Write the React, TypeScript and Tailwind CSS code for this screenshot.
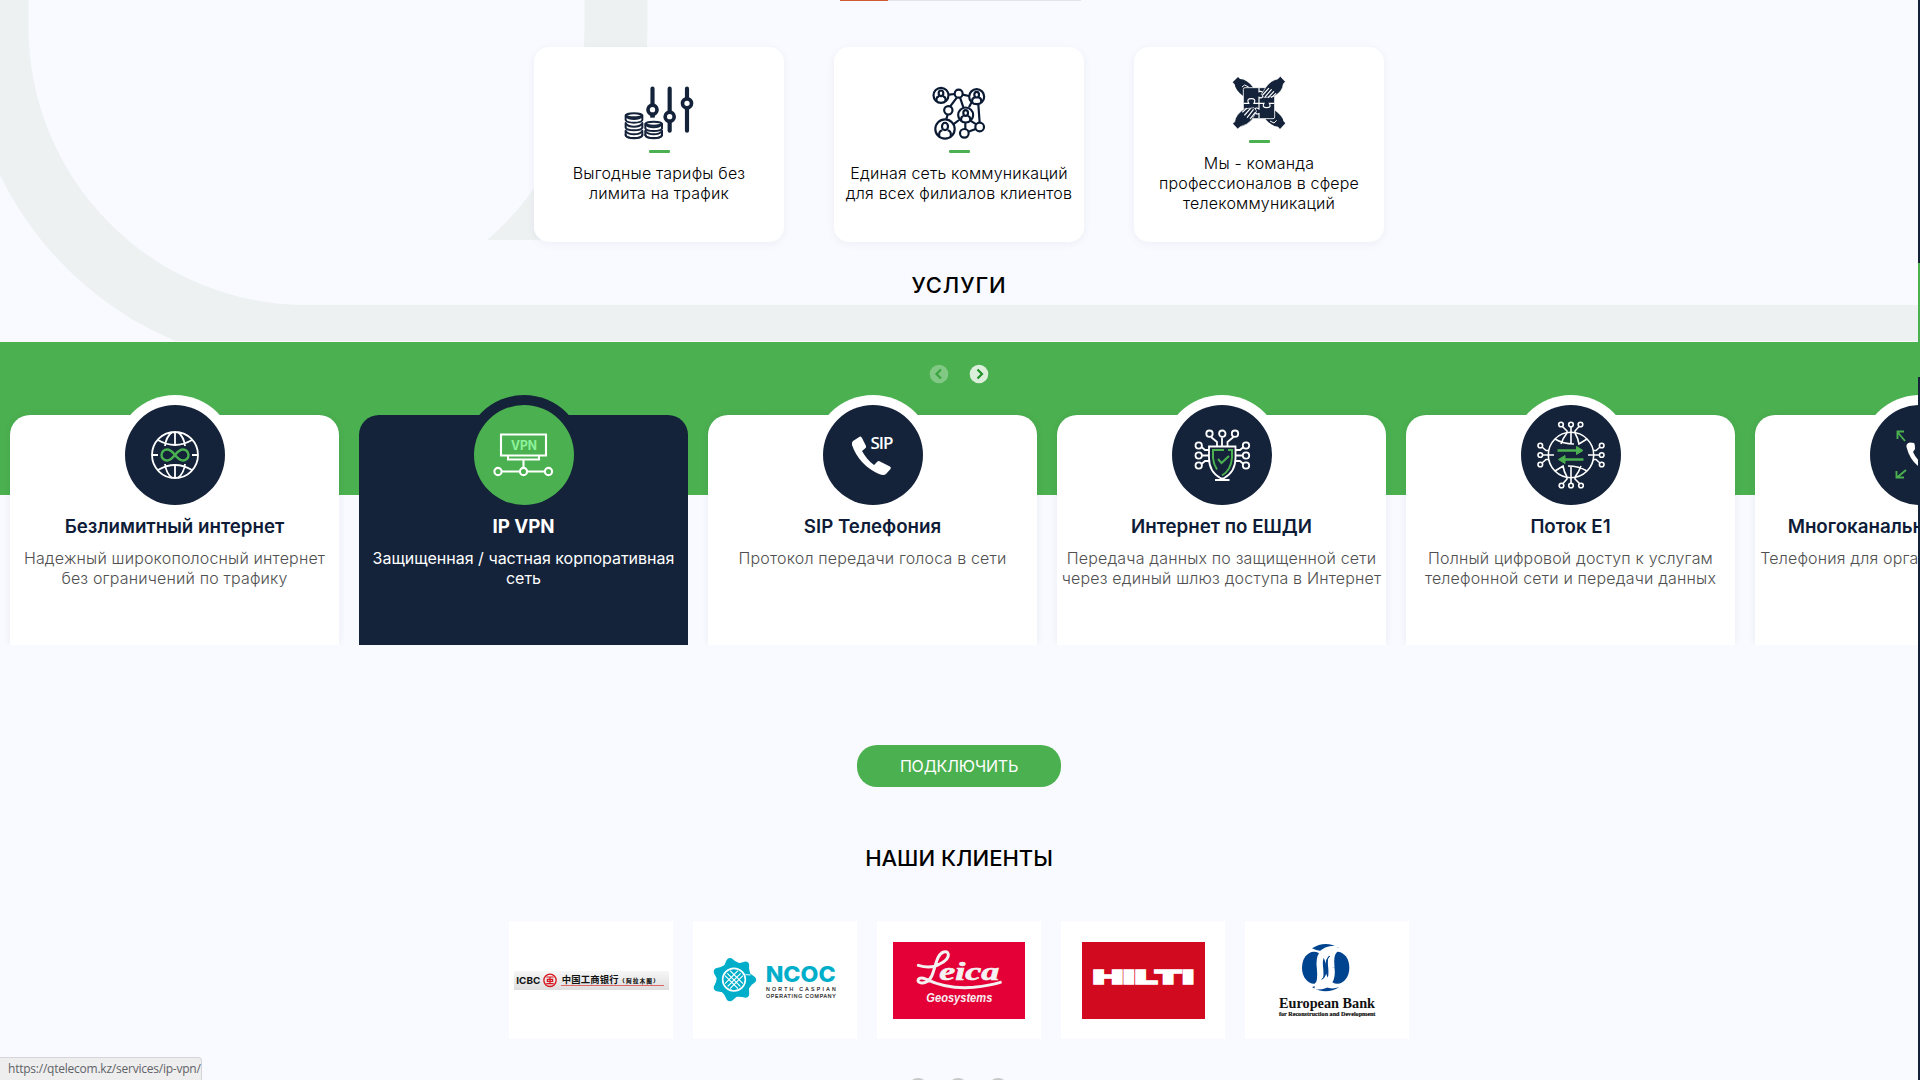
import React from "react";

const NAVY = "#14233a";
const GREEN = "#4bb04f";

function Backdrop() {
  return (
    <svg className="absolute left-0 top-0 -z-10" width="1918" height="341" viewBox="0 0 1918 341" fill="none">
      <path d="M1918 305H306.500A278 278 0 0 1 28.500 27V-20H-34V27A340.500 340.500 0 0 0 178 342H1918Z" fill="#edf1f2" />
      <path d="M584.500 -20V27A278 278 0 0 1 487 240H650V27V-20Z" fill="#edf1f2" />
      <path d="M647.500 -20V27Q647 150 600 240H700V-20Z" fill="#f9faff" />
    </svg>
  );
}

function Person({ cx, cy, r }: { cx: number; cy: number; r: number }) {
  const k = r / 24;
  return (
    <g transform={`translate(${cx} ${cy}) scale(${k})`} strokeWidth={6.500 / k}>
      <circle r="22.500" fill="#fff" />
      <ellipse cx="0" cy="-6" rx="7" ry="8.500" />
      <path d="M-13.500 17V11Q-13 4 -6 3M13.500 17V11Q13 4 6 3" />
    </g>
  );
}

function Coins({ x, tops, bottom }: { x: number; tops: number[]; bottom: number }) {
  return (
    <g>
      {tops.map((y, i) => (
        <g key={y}>
          {i === 0 && <ellipse cx={x + 25} cy={y} rx="24" ry="6" />}
          <path d={`M${x} ${y}V${y + 14}Q${x + 3} ${y + 22} ${x + 25} ${y + 22}T${x + 50} ${y + 14}V${y}`} />
          <path d={`M${x + 1} ${y + 3}Q${x + 8} ${y + 11} ${x + 25} ${y + 11}T${x + 49} ${y + 3}`} />
        </g>
      ))}
      <path d={`M${x} ${bottom - 10}Q${x + 4} ${bottom} ${x + 25} ${bottom}T${x + 50} ${bottom - 10}`} />
    </g>
  );
}

function TariffIcon() {
  return (
    <svg width="74" height="54" viewBox="307 257 222 162" fill="none" stroke={NAVY} strokeLinecap="round">
      <g strokeWidth="12.500">
        <path d="M398.500 265V311" />
        <path d="M398.500 343V352" strokeLinecap="butt" strokeWidth="14" />
        <path d="M450 265V332M450 366V391M502 265V292M502 326V391" />
      </g>
      <g strokeWidth="11">
        <circle cx="398.500" cy="328" r="13.500" />
        <circle cx="450" cy="349" r="13.500" />
        <circle cx="502" cy="309" r="13.500" />
      </g>
      <g strokeWidth="6">
        <Coins x={318} tops={[345, 368, 391]} bottom={414} />
        <Coins x={377} tops={[370, 391]} bottom={414} />
      </g>
    </svg>
  );
}

function NetworkIcon() {
  return (
    <svg width="54" height="54" viewBox="1237 258 162 162" fill="none" stroke="#0b1a33" strokeWidth="6.500">
      <path d="M1288 284L1305 282M1329 284L1348 288M1312 292L1291 320M1321 292L1331 322M1355 308L1348 322M1284 344L1280 357M1300 374L1318 360M1337 369V387M1376 313L1380 368M1346 395L1368 387M1352 362L1370 373" />
      <circle cx="1317" cy="281" r="12" fill="#fff" />
      <circle cx="1286" cy="331" r="12.500" fill="#fff" />
      <circle cx="1334" cy="400" r="13" fill="#fff" />
      <circle cx="1380" cy="381" r="13" fill="#fff" />
      <Person cx={1264} cy={286} r={24} />
      <Person cx={1371} cy={290} r={24} />
      <Person cx={1338} cy={345} r={24} />
      <Person cx={1276} cy={387} r={31} />
    </svg>
  );
}

function TeamIcon() {
  return (
    <svg width="54" height="54" viewBox="818 229 162 162" fill={NAVY}>
      <path d="M820 248L836 232L842 238Q862 238 882 264L858 270L852 290Q828 272 826 254Z" />
      <path d="M978 371L962 388L956 381Q936 380 918 358L942 352L946 332Q970 350 972 364Z" />
      <rect x="852" y="264" width="94" height="93" rx="5" stroke="#fff" strokeWidth="2.500" />
      <g fill="none" stroke="#fff" strokeWidth="3.500">
        <path d="M899 265V276Q911 272 911 285T899 293V328Q887 320 887 333T899 342V356" />
        <path d="M853 311H868Q861 297 876 297T884 311H914Q907 324 922 324T930 311H945" />
        <path d="M848 262L856 256L868 262M932 364L944 370L952 362" strokeWidth="3" />
      </g>
      <g stroke="#fff" strokeWidth="2">
        <path d="M978 246L963 230L955 238Q934 242 920 262L906 284L914 294L944 290Q970 276 972 253Z" />
        <path d="M820 372L835 388L843 381Q864 376 878 360L892 334L884 324L854 328Q828 346 826 366Z" />
      </g>
      <g stroke="#fff" strokeWidth="3.500" strokeLinecap="round">
        <path d="M910 286L928 266M918 291L936 270M927 293L943 276M937 293L949 282" />
        <path d="M850 337L862 326M856 346L873 327M864 353L882 330M873 357L888 338" />
      </g>
    </svg>
  );
}

const features = [
  { icon: <TariffIcon />, lines: ["Выгодные тарифы без", "лимита на трафик"] },
  { icon: <NetworkIcon />, lines: ["Единая сеть коммуникаций", "для всех филиалов клиентов"] },
  { icon: <TeamIcon />, lines: ["Мы - команда", "профессионалов в сфере", "телекоммуникаций"] },
];

function Glyph({ children }: { children: React.ReactNode }) {
  return (
    <svg width="100" height="100" viewBox="-50 -50 100 100" fill="none" stroke="#fff" strokeWidth="1.800">
      {children}
    </svg>
  );
}

const GlobeGlyph = (
  <Glyph>
    <path d="M-23 0A23 23 0 0 1 23 0M-23 0A23 23 0 0 0 23 0M-23 0H-17M17 0H23M0 -23V-9M0 23V9" />
    <path d="M-17 -15Q0 -5 17 -15M-17 15Q0 5 17 15M-3 -23Q-9 -18 -10 -9M3 -23Q9 -18 10 -9M-3 23Q-9 18 -10 9M3 23Q9 18 10 9" />
    <path d="M0 0C-4 -5 -6 -5.500 -8 -5.500A5.500 5.500 0 0 0 -8 5.500C-6 5.500 -4 5 0 0C4 -5 6 -5.500 8 -5.500A5.500 5.500 0 0 1 8 5.500C6 5.500 4 5 0 0Z" stroke={GREEN} strokeWidth="2.400" />
  </Glyph>
);

const VpnGlyph = (
  <Glyph>
    <path d="M-23 -20.500H22V0.500H-23ZM-16 0.500V4.500H15V0.500M-0.500 5V12M-22 16.500H-4.500M3.500 16.500H21" strokeWidth="2.100" />
    <g strokeWidth="2.100">
      <circle cx="-26" cy="16.500" r="3.600" />
      <circle cx="-0.500" cy="16.500" r="3.600" />
      <circle cx="24.500" cy="16.500" r="3.600" />
    </g>
    <text x="-13" y="-5.500" fontSize="12.500" fontWeight="700" fill="#8df29a" stroke="none" textLength="26" lengthAdjust="spacingAndGlyphs" className="font-['Inter',sans-serif]">VPN</text>
  </Glyph>
);

const SipGlyph = (
  <Glyph>
    <path d="M-20 -14L-13 -18.500Q-12 -19 -11 -17L-7 -9Q-6.500 -7.500 -8 -6.500L-11 -4Q-6 5 1 10L4 7Q5.500 5.500 7 6.500L17 11.500Q18.500 12.500 17.500 14L13 19Q11 21 6 19Q-14 10 -21 -10Q-21.500 -13 -20 -14Z" fill="#fff" stroke="none" />
    <text x="-2.500" y="-6.500" fontSize="17" fontWeight="600" fill="#fff" stroke="none" textLength="23" className="font-['Open_Sans',sans-serif]">SIP</text>
  </Glyph>
);

const ShieldGlyph = (
  <Glyph>
    <path d="M-13 -8.500H13.500V3Q13.500 17 1.500 23.500H-1Q-13 17 -13 3ZM-7 25H7.500M0 -17.500V-9M-11 -18L-5 -13V-9M11.500 -18L5.500 -13V-9M-20.500 -8L-17 -5H-13M-20 0.500H-13M-20.500 9L-17 6H-13M21.500 -8L18 -5H14M21 0.500H14M21.500 9L18 6H14" />
    {[-12.500, 0.300, 13].map((x) => <circle key={x} cx={x} cy="-21.300" r="3.200" />)}
    {[-9.500, 0.500, 10.500].map((y) => <g key={y}><circle cx="-23.300" cy={y} r="3.200" /><circle cx="24" cy={y} r="3.200" /></g>)}
    <path d="M2 -5H-9V3Q-8.500 9 -5 14.500M6 -5H10V3Q9 15 0 20.500M-4 4L-0.500 8L7 1" stroke={GREEN} strokeWidth="2" />
  </Glyph>
);

const E1Glyph = (
  <Glyph>
    <g strokeWidth="1.600">
      <circle r="22.700" />
      {[0, 180].map((a) => (
        <g key={a} transform={`rotate(${a})`}>
          <path d="M-16 -16Q-8 -11 3 -11M0 -23V-11M-4 -22Q-8 -17 -10 -11M4 -22Q7 -17 8 -11L16 -16M0 -28V-22M-8.500 -28.500L-4 -24V-22M8 -28.500L4 -24V-22" />
          <circle cx="-10" cy="-30.500" r="2.300" /><circle cy="-30.500" r="2.300" /><circle cx="9.500" cy="-30.500" r="2.300" />
          <path d="M-28.500 0H-17M-29 -8L-25 -4.500H-22M-29 8L-25 4.500H-22" />
          <circle cx="-30.700" cy="-9.500" r="2.300" /><circle cx="-30.700" r="2.300" /><circle cx="-30.700" cy="9.500" r="2.300" />
        </g>
      ))}
    </g>
    <g stroke={GREEN} strokeWidth="2.600" fill={GREEN}>
      <path d="M-13.500 -4.500H7M12.500 4.500H-7" />
      <path d="M5.500 -8.500V-0.500L12 -4.500ZM-6 8.500V0.500L-12.500 4.500Z" strokeWidth="1" />
    </g>
  </Glyph>
);

const MultiGlyph = (
  <Glyph>
    <path d="M-13.500 -8Q-14 -12 -10 -12.500L-6 -12Q-5 -11 -5 -6L-7 -3Q-4 4 3 9L7 7L13 11Q12 17 7 16Q-9 10 -13.500 -8Z" fill="#fff" stroke="none" />
    <g stroke={GREEN} strokeWidth="1.900">
      {[0, 90, 180, 270].map((a) => <path key={a} transform={`rotate(${a})`} d="M-15 -14L-22.500 -23M-22.500 -16V-23.500H-16" />)}
    </g>
  </Glyph>
);

const services = [
  { glyph: GlobeGlyph, title: "Безлимитный интернет", lines: ["Надежный широкополосный интернет", "без ограничений по трафику"] },
  { glyph: VpnGlyph, title: "IP VPN", lines: ["Защищенная / частная корпоративная", "сеть"], active: true },
  { glyph: SipGlyph, title: "SIP Телефония", lines: ["Протокол передачи голоса в сети"] },
  { glyph: ShieldGlyph, title: "Интернет по ЕШДИ", lines: ["Передача данных по защищенной сети", "через единый шлюз доступа в Интернет"] },
  { glyph: E1Glyph, title: "Поток Е1", lines: ["Полный цифровой доступ к услугам", "телефонной сети и передачи данных"] },
  { glyph: MultiGlyph, title: "Многоканальная телефония", lines: ["Телефония для организаций и компаний"] },
];

function ServiceCard({ s }: { s: (typeof services)[number] }) {
  const on = s.active;
  return (
    <div className={`flex h-[230px] w-[329px] shrink-0 flex-col items-center rounded-t-[20px] text-center ${on ? "bg-[#14233a]" : "bg-white shadow-[0_0_8px_rgba(20,35,80,0.06)]"}`}>
      <div className={`-mt-5 flex size-[120px] shrink-0 items-center justify-center rounded-full ${on ? "bg-[#14233a]" : "bg-white"}`}>
        <div className={`size-[100px] rounded-full ${on ? "bg-[#4bb04f]" : "bg-[#14233a]"}`}>{s.glyph}</div>
      </div>
      <h3 className={`whitespace-nowrap text-[18.720px] leading-[23px] ${on ? "font-bold text-white" : "font-semibold text-[#0e1c38]"}`}>{s.title}</h3>
      <p className={`mt-[10px] whitespace-nowrap text-[16px] leading-5 ${on ? "font-normal text-white" : "font-light tracking-[0.170px] text-[#505050]"}`}>
        {s.lines.map((l) => <span key={l} className="block">{l}</span>)}
      </p>
    </div>
  );
}

function Icbc() {
  return (
    <svg width="164" height="118" viewBox="27 63 492 354">
      <defs>
        <linearGradient id="strip" x1="0" y1="0" x2="0" y2="1"><stop offset="0" stopColor="#f6f6f6" /><stop offset="1" stopColor="#dedede" /></linearGradient>
      </defs>
      <rect x="42" y="213" width="465" height="57" fill="url(#strip)" />
      <text x="49" y="251" fontSize="28" fontWeight="700" fill="#111" textLength="72" lengthAdjust="spacingAndGlyphs" className="font-['Inter',sans-serif]">ICBC</text>
      <g fill="none" stroke="#d8141c" strokeWidth="4">
        <circle cx="150" cy="241" r="18.500" />
        <path d="M139 231H161M139 251H161M142 238H158V244H142ZM150 231V251" strokeWidth="3.500" />
      </g>
      <text x="185" y="249" fontSize="28" fontWeight="700" fill="#111" textLength="171" className="font-['Noto_Sans_CJK_SC',sans-serif]">中国工商银行</text>
      <text x="358" y="249" fontSize="16" fontWeight="700" fill="#111" stroke="#111" strokeWidth="0.600" textLength="118" className="font-['Noto_Sans_CJK_SC',sans-serif]">（阿拉木图）</text>
      <path d="M183 256.500H492" stroke="#dc4a4a" strokeWidth="2.500" />
    </svg>
  );
}

function Ncoc() {
  return (
    <svg width="164" height="118" viewBox="579 63 492 354">
      <g transform="translate(702 239)">
        {[0, 51.43, 102.86, 154.29, 205.71, 257.14, 308.57].map((a) => (
          <g key={a} transform={`rotate(${a})`}>
            <path fill="#00aeca" d="M0 -34L34 -27Q48 -20 62 -9Q70 -1 64 7Q52 14 42 30L20 38L0 34Z" />
            <path d="M33 17L42 30" stroke="#fff" strokeWidth="2.500" />
          </g>
        ))}
        <circle r="34" fill="#00aeca" stroke="#fff" strokeWidth="5" />
        <path d="M-27 -12L12 27M-20 -19L19 20M-12 -27L27 12M27 -12L-12 27M20 -19L-19 20M12 -27L-27 12" stroke="#fff" strokeWidth="3.500" />
      </g>
      <text x="797" y="246" fontSize="65" fontWeight="800" fill="#00aeca" textLength="210" lengthAdjust="spacingAndGlyphs" className="font-['Inter',sans-serif]">NCOC</text>
      <g fontSize="15.500" fill="#222" stroke="#222" strokeWidth="0.500" className="font-['Liberation_Sans',sans-serif]">
        <text x="798" y="273" textLength="209">NORTH CASPIAN</text>
        <text x="798" y="294" textLength="209">OPERATING COMPANY</text>
      </g>
    </svg>
  );
}

function Leica() {
  return (
    <svg width="164" height="118" viewBox="0 3 492 354">
      <rect x="48" y="66" width="396" height="231" fill="#e40036" />
      <path d="M124 136Q162 148 188 132Q216 118 214 103Q211 92 200 96C182 102 178 128 170 152Q160 190 134 189Q120 187 124 178Q130 170 148 178C190 198 240 206 290 202Q340 196 370 187" fill="none" stroke="#f4f1f2" strokeWidth="9" strokeLinecap="round" />
      <text x="187" y="180" fontSize="78" fontWeight="700" fontStyle="italic" fill="#f4f1f2" stroke="#f4f1f2" strokeWidth="2" textLength="180" lengthAdjust="spacingAndGlyphs" className="font-['Liberation_Serif',serif]">eica</text>
      <text x="148" y="246" fontSize="41" fontWeight="700" fontStyle="italic" fill="#f7eef0" textLength="198" lengthAdjust="spacingAndGlyphs" className="font-['Liberation_Sans',sans-serif]">Geosystems</text>
    </svg>
  );
}

function Hilti() {
  return (
    <svg width="164" height="118" viewBox="303 63 492 354">
      <rect x="366" y="126" width="369" height="231" fill="#d20a1f" />
      <text x="398" y="252" fontSize="57" fontWeight="900" fill="#fff" stroke="#fff" strokeWidth="4" textLength="304" lengthAdjust="spacingAndGlyphs" className="font-['Inter',sans-serif]">HILTI</text>
    </svg>
  );
}

function Ebrd() {
  return (
    <svg width="164" height="118" viewBox="855 63 492 354">
      <g fill="#00438f">
        <ellipse cx="1062" cy="203" rx="36" ry="48" />
        <ellipse cx="1132" cy="203" rx="36" ry="48" />
        <path d="M1056 145Q1097 119 1138 145Q1118 137 1098 144Q1084 160 1056 145ZM1056 261Q1097 287 1138 261Q1118 269 1098 262Q1084 250 1056 261Z" />
      </g>
      <path d="M1132 147C1082 143 1076 174 1080 204C1083 236 1080 252 1070 258M1064 259C1112 263 1118 232 1114 202C1111 172 1114 156 1126 148" fill="none" stroke="#fff" strokeWidth="19" />
      <path d="M1109 168Q1096 180 1098 203T1086 238Q1099 228 1098 203T1109 168Z" fill="#00438f" stroke="#00438f" strokeWidth="3" />
      <text x="957" y="324" fontSize="43" fontWeight="700" fill="#111" textLength="288" lengthAdjust="spacingAndGlyphs" className="font-['Liberation_Serif',serif]">European Bank</text>
      <text x="957" y="348" fontSize="18" fontWeight="700" fill="#111" stroke="#111" strokeWidth="0.600" textLength="289" lengthAdjust="spacingAndGlyphs" className="font-['Liberation_Serif',serif]">for Reconstruction and Development</text>
    </svg>
  );
}

const clients = [Icbc, Ncoc, Leica, Hilti, Ebrd];

function Arrow({ dir, dim }: { dir: "left" | "right"; dim?: boolean }) {
  return (
    <svg width="20" height="20" viewBox="0 0 20 20" className={dim ? "opacity-30" : "opacity-80"}>
      <circle cx="10" cy="10" r="9.300" fill="#fff" />
      <path d={dir === "left" ? "M12 5.500L7.500 10L12 14.500" : "M8.500 5.500L13 10L8.500 14.500"} fill="none" stroke="#178a20" strokeWidth="2.200" />
    </svg>
  );
}

export default function App() {
  return (
    <div className="relative isolate flex h-[1080px] w-[1920px] overflow-hidden bg-[#f9faff] font-['Inter',sans-serif] text-black">
      <Backdrop />
      <main className="flex w-[1918px] shrink-0 flex-col items-center overflow-hidden">
        <div className="ml-[3px] flex h-px w-[241px] shrink-0 bg-[#e3e4e6]">
          <div className="w-12 bg-[#cf5b2e]" />
        </div>
        <section className="mt-[46px] flex shrink-0 gap-[50px]">
          {features.map((f) => (
            <article key={f.lines[0]} className="flex h-[195px] w-[250px] flex-col items-center justify-center rounded-[15px] bg-white text-center shadow-[0_2px_10px_rgba(20,35,80,0.05)]">
              {f.icon}
              <div className="mt-[10px] h-[3px] w-[21px] rounded-[1px] bg-[#4bb04f]" />
              <p className="mt-[10px] text-[16px] leading-5 font-light tracking-[0.180px] whitespace-nowrap">
                {f.lines.map((l) => <span key={l} className="block">{l}</span>)}
              </p>
            </article>
          ))}
        </section>
        <h2 className="mt-[30px] shrink-0 text-[22px] leading-[26px] font-medium tracking-[0.900px]">УСЛУГИ</h2>
        <section className="mt-[44px] flex h-[303px] w-full shrink-0 flex-col overflow-hidden bg-linear-to-b from-[#4bb04f] from-[153px] to-transparent to-[153px]">
          <div className="flex justify-center gap-5 pt-[22px]">
            <Arrow dir="left" dim />
            <Arrow dir="right" />
          </div>
          <div className="mt-[31px] flex gap-5 pl-[10px]">
            {services.map((s) => <ServiceCard key={s.title} s={s} />)}
          </div>
        </section>
        <button className="mt-[100px] h-[42px] w-[204px] shrink-0 rounded-[20px] bg-[#4bb04f] text-[16px] tracking-[-0.200px] text-white">ПОДКЛЮЧИТЬ</button>
        <h2 className="mt-[58px] shrink-0 text-[22px] leading-[26px] font-medium">НАШИ КЛИЕНТЫ</h2>
        <section className="mt-[50px] flex shrink-0 gap-5">
          {clients.map((Logo, i) => (
            <div key={i} className="h-[118px] w-[164px] bg-white"><Logo /></div>
          ))}
        </section>
        <div className="mt-[39px] mr-[2px] flex shrink-0 gap-5">
          <span className="size-5 rounded-full bg-[#c4c8c6]" />
          <span className="size-5 rounded-full bg-[#c4c8c6]" />
          <span className="size-5 rounded-full bg-[#c4c8c6]" />
        </div>
      </main>
      <aside className="flex w-[2px] shrink-0 flex-col bg-[#14233a] pt-[263px]">
        <div className="h-[114px] bg-[#4bb04f]" />
      </aside>
      <div className="absolute bottom-0 left-0 h-[23px] w-[202px] rounded-tr-[4px] border-t border-r border-[#d5d5d9] bg-[#eee] pl-2 font-['Open_Sans',sans-serif] text-[12px] leading-[21px] tracking-[-0.230px] whitespace-nowrap text-[#5f6368]">
        https://qtelecom.kz/services/ip-vpn/
      </div>
    </div>
  );
}
